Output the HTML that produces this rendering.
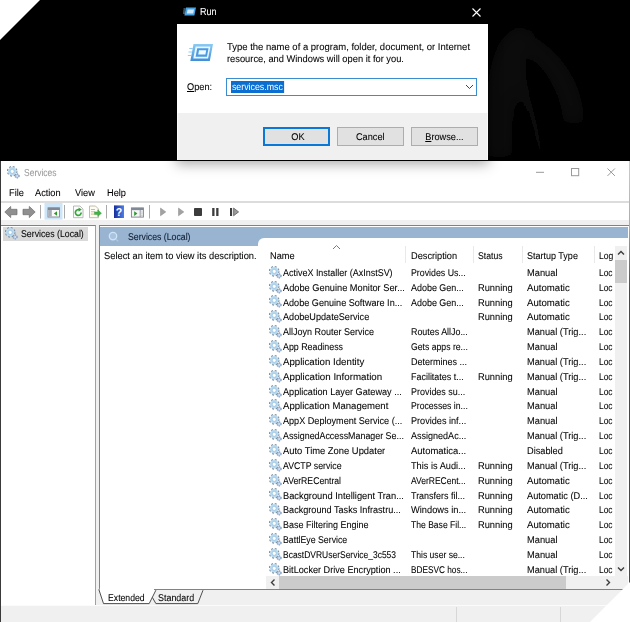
<!DOCTYPE html>
<html><head><meta charset="utf-8"><title>Services</title>
<style>
html,body{margin:0;padding:0}
body{width:630px;height:622px;position:relative;overflow:hidden;background:#fff;font-family:"Liberation Sans",sans-serif;}
.t{position:absolute;height:12px;line-height:12px;white-space:nowrap;transform:scaleX(.94);transform-origin:0 50%;text-rendering:geometricPrecision;-webkit-text-stroke:.07px currentColor}
.gear{position:absolute}
#top{position:absolute;left:0;top:0;width:630px;height:161px;background:#000}
#smoke{position:absolute;left:488px;top:0}
#run{position:absolute;left:177px;top:0;width:311px;height:160px;background:#000;box-shadow:0 1px 0 rgba(0,0,0,.45),0 3px 12px 1px rgba(0,0,0,.34)}
#runbody{position:absolute;left:0;top:24px;width:311px;height:88.5px;background:#fff}
#runfoot{position:absolute;left:0;top:112.5px;width:311px;height:47.500px;background:#f0f0f0;border-left:1px solid #fafafa;border-right:1px solid #fafafa;box-sizing:border-box}
#inp{position:absolute;left:226px;top:78px;width:251px;height:18px;box-sizing:border-box;border:1px solid #3a8ed0;background:#fff}
#sel{position:absolute;left:3.5px;top:1.5px;height:12.500px;line-height:14px;font-size:9.8px;transform:scaleX(.90);transform-origin:0 50%;text-rendering:geometricPrecision;background:#0a6fd0;color:#fff;padding:0 1px}
.btn{position:absolute;top:127px;width:67px;height:19px;box-sizing:border-box;border:1px solid #adadad;background:#e1e1e1;font-size:9.8px;line-height:19.5px;text-align:center;color:#000;text-rendering:geometricPrecision;-webkit-text-stroke:.07px #000}
.btn span{display:inline-block;transform:scaleX(.94)}
#ok{border:2px solid #0a78d7;line-height:17.5px;text-indent:2px}
#svc{position:absolute;left:0;top:161px;width:630px;height:461px;background:#fff}
#shadow{position:absolute;left:168px;top:160px;width:330px;height:11px;background:linear-gradient(rgba(0,0,0,.22),rgba(0,0,0,.06) 50%,rgba(0,0,0,0))}
</style></head><body>
<div id="top"></div>
<svg id="smoke" width="142" height="161" viewBox="488 0 142 161"><defs><filter id="bl" x="-50%" y="-50%" width="200%" height="200%"><feGaussianBlur stdDeviation="9"/></filter></defs><g filter="url(#bl)" fill="none" stroke="#161616" stroke-linecap="round"><path d="M499 150C497 95 503 48 520 38" stroke-width="15"/><path d="M520 38C545 52 568 75 574 118" stroke-width="11"/><path d="M515 60C525 90 535 120 540 150" stroke-width="12" stroke="#0f0f0f"/></g></svg>
<div id="svc"></div>
<div id="run"><div id="runbody"></div><div id="runfoot"></div></div>
<svg style="position:absolute;left:183px;top:6px" width="14" height="12" viewBox="0 0 14 12"><path d="M3 1.5h10l-1.6 8H1.4z" fill="#4aa3e0"/><path d="M4.6 3.4h6.4l-.8 4.2H3.8z" fill="#cfeaff"/><path d="M0.5 3h2M0.2 5h2M0 7h2" stroke="#8fd0ff" stroke-width=".8"/></svg>
<div class="t" style="left:199.8px;top:7.10px;font-size:10.2px;color:#fff;transform:scaleX(0.888);">Run</div>
<svg style="position:absolute;left:471.5px;top:7.5px" width="9" height="9" viewBox="0 0 9 9"><path d="M.5 .5l8 8M8.500 .5l-8 8" stroke="#fff" stroke-width="1.100"/></svg>
<svg style="position:absolute;left:186.5px;top:43px" width="27" height="20" viewBox="0 0 27 20"><defs><linearGradient id="rg" x1="0" y1="0" x2="0" y2="1"><stop offset="0" stop-color="#8ccbf3"/><stop offset="1" stop-color="#3f8fd6"/></linearGradient></defs><path d="M6.500 1h19.500l-3.200 17H3.300z" fill="url(#rg)"/><path d="M8.600 3.400h14.800l-2.300 12.200H6.300z" fill="#e9f6ff"/><path d="M10.200 5.200h11.300l-1.600 8.600H8.600z" fill="#4a9be0"/><path d="M12 7.300h7.200l-.8 4.200h-7.200z" fill="#f2faff"/><path d="M2.200 5.500h3.600M1.500 9h3.600M.8 12.500h3.600" stroke="#8fcdf5" stroke-width="1.200"/></svg>
<div class="t" style="left:226.7px;top:42.20px;font-size:9.8px;color:#000;transform:scaleX(0.968);">Type the name of a program, folder, document, or Internet</div>
<div class="t" style="left:226.7px;top:53.70px;font-size:9.8px;color:#000;transform:scaleX(0.95);">resource, and Windows will open it for you.</div>
<div class="t" style="left:187px;top:82.10px;font-size:9.8px;color:#000;"><u>O</u>pen:</div>
<div id="inp"><span id="sel">services.msc</span></div>
<svg style="position:absolute;left:465px;top:84px" width="9" height="6" viewBox="0 0 9 6"><path d="M1 1l3.5 3.5L8 1" fill="none" stroke="#444" stroke-width="1"/></svg>
<div class="btn" id="ok" style="left:263px"><span>OK</span></div>
<div class="btn" style="left:337px"><span>Cancel</span></div>
<div class="btn" style="left:411px"><span><u>B</u>rowse...</span></div>
<svg class="gear" style="left:7px;top:165.5px" width="14" height="13" viewBox="0 0 14 13"><circle cx="5.200" cy="5.300" r="4.600" fill="none" stroke="#7e93a6" stroke-width="1.500" stroke-dasharray="1.900 1.713"/><circle cx="5.200" cy="5.300" r="2.950" fill="#fff" stroke="#bddaee" stroke-width="2.700"/><circle cx="5.200" cy="5.300" r="2.300" fill="none" stroke="#a6cfea" stroke-width="1"/><circle cx="10.100" cy="9.900" r="2.050" fill="#adc3df" stroke="#7f98be" stroke-width="1.100" stroke-dasharray="1.100 1.046"/><circle cx="10.100" cy="9.900" r=".75" fill="#eef6ff"/></svg>
<div class="t" style="left:24px;top:167.70px;font-size:10px;color:#999;transform:scaleX(0.85);">Services</div>
<svg style="position:absolute;left:530px;top:164px" width="90" height="16" viewBox="0 0 90 16"><g stroke="#999" stroke-width="1" fill="none"><path d="M6 8.300h8"/><rect x="41.500" y="4.500" width="7.200" height="7.200"/><path d="M77.500 4.500l7.400 7.400M84.900 4.500l-7.400 7.400"/></g></svg>
<div class="t" style="left:9px;top:187.80px;font-size:9.8px;color:#000;">File</div>
<div class="t" style="left:35px;top:187.80px;font-size:9.8px;color:#000;">Action</div>
<div class="t" style="left:75px;top:187.80px;font-size:9.8px;color:#000;">View</div>
<div class="t" style="left:107px;top:187.80px;font-size:9.8px;color:#000;">Help</div>
<div style="position:absolute;left:0px;top:201px;width:630px;height:1.5px;background:#dcdcdc"></div>
<svg style="position:absolute;left:0;top:203px" width="250" height="19" viewBox="0 0 250 19">
<rect x="44.500" y="0" width="18" height="16.600" fill="#cde5f8"/>
<g fill="#909090" stroke="#6e6e6e" stroke-width=".7" stroke-linejoin="round"><path d="M4.800 9l5.900-5.600v2.900h6.300v5.400h-6.300v2.900z"/><path d="M35.200 9l-5.900-5.600v2.900h-6.300v5.400h6.300v2.900z"/></g>
<g stroke="#a9a9a9" stroke-width="1"><path d="M40.500 2v13.500M64.500 2v13.500M106.500 2v13.500M149.500 2v13.500"/></g>
<g><rect x="48" y="4.800" width="11.500" height="9.200" fill="#fafafa" stroke="#80868e" stroke-width=".9"/><rect x="48" y="4.800" width="11.500" height="2.200" fill="#7f8894"/><rect x="48.400" y="7" width="3.400" height="6.600" fill="#a9afb8"/><path d="M57 8.200l-3.200 2.300 3.200 2.300z" fill="#2a9a2f"/></g>
<g><path d="M73.500 3h6.500l3 3v8.700h-9.500z" fill="#fcfcfc" stroke="#a8a8a8" stroke-width=".8"/><path d="M81.200 9.600a2.900 2.900 0 1 1-1.300-2.500" fill="none" stroke="#35a53a" stroke-width="1.700"/><path d="M78.600 4.600l3.200 2-3.200 2.200z" fill="#35a53a"/></g>
<g><path d="M89.500 3h6l3 3v8.700h-9z" fill="#fdfcf4" stroke="#b3ad94" stroke-width=".8"/><path d="M91 6.500h4M91 8.800h4M91 11.100h3.500" stroke="#c9b679" stroke-width=".9"/><path d="M94.500 8.900h3.200v-2.100l3.800 3.400-3.800 3.400v-2.100h-3.200z" fill="#3fb344" stroke="#2e9434" stroke-width=".4"/></g>
<g><rect x="114" y="2.400" width="10" height="12.600" fill="url(#hg)"/><text x="119" y="12.600" font-family="Liberation Sans, sans-serif" font-size="10.500" font-weight="bold" fill="#fff" text-anchor="middle">?</text></g>
<defs><linearGradient id="hg" x1="0" x2="1" y1="0" y2="0"><stop offset="0" stop-color="#1a2c9c"/><stop offset="1" stop-color="#4b80e6"/></linearGradient></defs>
<g><rect x="131.400" y="4.900" width="12" height="9.200" fill="#f4f4f4" stroke="#7c7f86" stroke-width=".9"/><rect x="131.400" y="4.900" width="12" height="2.200" fill="#7f8894"/><path d="M140.200 7v7" stroke="#8e9299" stroke-width=".9"/><path d="M141.900 8.500v4.500" stroke="#9aa0a8" stroke-width=".8" stroke-dasharray="1 .8"/><path d="M134.200 8.300l3.200 2.300-3.200 2.300z" fill="#2a9a2f"/></g>
<g fill="#a2a2a2" stroke="#8a8a8a" stroke-width=".5"><path d="M160.500 5l5.300 3.900-5.300 3.900z"/><path d="M178.500 5l5.300 3.900-5.300 3.900z"/></g>
<g fill="#3c3c3c"><rect x="194" y="5" width="8" height="8" rx=".8"/><rect x="212.200" y="5" width="2.300" height="8"/><rect x="216.200" y="5" width="2.300" height="8"/><rect x="230" y="5" width="2.100" height="8"/></g><path d="M233.600 5l5 3.900-5 3.900z" fill="#9a9a9a" stroke="#555" stroke-width=".7"/>
</svg>
<div style="position:absolute;left:0px;top:219.5px;width:630px;height:6.5px;background:#f0f0f0"></div>
<div style="position:absolute;left:0px;top:225px;width:96px;height:380px;background:#fff;border:1px solid #828282;border-left-color:#555;border-right-color:#a0a0a0;border-bottom:0;box-sizing:border-box"></div>
<div style="position:absolute;left:3px;top:227px;width:85px;height:14px;background:#d9d9d9"></div>
<svg class="gear" style="left:5px;top:227px" width="14" height="13" viewBox="0 0 14 13"><circle cx="5.200" cy="5.300" r="4.600" fill="none" stroke="#7e93a6" stroke-width="1.500" stroke-dasharray="1.900 1.713"/><circle cx="5.200" cy="5.300" r="2.950" fill="#fff" stroke="#bddaee" stroke-width="2.700"/><circle cx="5.200" cy="5.300" r="2.300" fill="none" stroke="#a6cfea" stroke-width="1"/><circle cx="10.100" cy="9.900" r="2.050" fill="#adc3df" stroke="#7f98be" stroke-width="1.100" stroke-dasharray="1.100 1.046"/><circle cx="10.100" cy="9.900" r=".75" fill="#eef6ff"/></svg>
<div class="t" style="left:21.3px;top:229.00px;font-size:9.8px;color:#000;transform:scaleX(0.894);">Services (Local)</div>
<div style="position:absolute;left:96px;top:225px;width:3.5px;height:381px;background:#f0f0f0"></div>
<div style="position:absolute;left:99px;top:225px;width:531px;height:365px;background:#fff;border:1px solid #828282;box-sizing:border-box"></div>
<div style="position:absolute;left:100px;top:226.5px;width:528px;height:19px;background:#99b4d1"></div>
<svg style="position:absolute;left:107px;top:230px" width="13" height="13" viewBox="0 0 13 13"><circle cx="6" cy="6.100" r="3.700" fill="#a9c3df" stroke="#cfe4f6" stroke-width="1.300"/><path d="M9.200 9.300l2 2" stroke="#b4cbe4" stroke-width="1.200"/></svg>
<div class="t" style="left:128px;top:231.80px;font-size:9.8px;color:#0b1a2e;transform:scaleX(0.89);">Services (Local)</div>
<div class="t" style="left:104.3px;top:251.20px;font-size:9.8px;color:#000;transform:scaleX(0.95);">Select an item to view its description.</div>
<div style="position:absolute;left:258px;top:238px;width:370px;height:351px;background:#fff;border-radius:6px 0 0 0"></div>
<div class="t" style="left:270.3px;top:251.20px;font-size:9.8px;color:#000;">Name</div>
<div class="t" style="left:411.2px;top:251.20px;font-size:9.8px;color:#000;">Description</div>
<div class="t" style="left:477.8px;top:251.20px;font-size:9.8px;color:#000;transform:scaleX(0.885);">Status</div>
<div class="t" style="left:527.3px;top:251.20px;font-size:9.8px;color:#000;transform:scaleX(0.919);">Startup Type</div>
<div class="t" style="left:598.8px;top:251.20px;font-size:9.8px;color:#000;transform:scaleX(0.874);">Log</div>
<svg style="position:absolute;left:332px;top:244px" width="9" height="6" viewBox="0 0 9 6"><path d="M1 5l3.500-3.500L8 5" fill="none" stroke="#7a7a7a" stroke-width="1"/></svg>
<div style="position:absolute;left:404.5px;top:246px;width:1px;height:17px;background:#e9e9e9"></div>
<div style="position:absolute;left:472.5px;top:246px;width:1px;height:17px;background:#e9e9e9"></div>
<div style="position:absolute;left:521.5px;top:246px;width:1px;height:17px;background:#e9e9e9"></div>
<div style="position:absolute;left:593.5px;top:246px;width:1px;height:17px;background:#e9e9e9"></div>
<svg class="gear" style="left:268.8px;top:265.7px" width="14" height="13" viewBox="0 0 14 13"><circle cx="5.200" cy="5.300" r="4.600" fill="none" stroke="#7e93a6" stroke-width="1.500" stroke-dasharray="1.900 1.713"/><circle cx="5.200" cy="5.300" r="2.950" fill="#fff" stroke="#bddaee" stroke-width="2.700"/><circle cx="5.200" cy="5.300" r="2.300" fill="none" stroke="#a6cfea" stroke-width="1"/><circle cx="10.100" cy="9.900" r="2.050" fill="#adc3df" stroke="#7f98be" stroke-width="1.100" stroke-dasharray="1.100 1.046"/><circle cx="10.100" cy="9.900" r=".75" fill="#eef6ff"/></svg>
<div class="t" style="left:282.9px;top:267.80px;font-size:9.8px;color:#000;transform:scaleX(0.915);">ActiveX Installer (AxInstSV)</div>
<div class="t" style="left:411.2px;top:267.80px;font-size:9.8px;color:#000;transform:scaleX(0.897);">Provides Us...</div>
<div class="t" style="left:527.3px;top:267.80px;font-size:9.8px;color:#000;transform:scaleX(0.949);">Manual</div>
<div class="t" style="left:598.8px;top:267.80px;font-size:9.8px;color:#000;transform:scaleX(0.855);">Loc</div>
<svg class="gear" style="left:268.8px;top:280.6px" width="14" height="13" viewBox="0 0 14 13"><circle cx="5.200" cy="5.300" r="4.600" fill="none" stroke="#7e93a6" stroke-width="1.500" stroke-dasharray="1.900 1.713"/><circle cx="5.200" cy="5.300" r="2.950" fill="#fff" stroke="#bddaee" stroke-width="2.700"/><circle cx="5.200" cy="5.300" r="2.300" fill="none" stroke="#a6cfea" stroke-width="1"/><circle cx="10.100" cy="9.900" r="2.050" fill="#adc3df" stroke="#7f98be" stroke-width="1.100" stroke-dasharray="1.100 1.046"/><circle cx="10.100" cy="9.900" r=".75" fill="#eef6ff"/></svg>
<div class="t" style="left:282.9px;top:282.65px;font-size:9.8px;color:#000;transform:scaleX(0.944);">Adobe Genuine Monitor Ser...</div>
<div class="t" style="left:411.2px;top:282.65px;font-size:9.8px;color:#000;transform:scaleX(0.913);">Adobe Gen...</div>
<div class="t" style="left:477.8px;top:282.65px;font-size:9.8px;color:#000;transform:scaleX(0.948);">Running</div>
<div class="t" style="left:527.3px;top:282.65px;font-size:9.8px;color:#000;transform:scaleX(0.982);">Automatic</div>
<div class="t" style="left:598.8px;top:282.65px;font-size:9.8px;color:#000;transform:scaleX(0.855);">Loc</div>
<svg class="gear" style="left:268.8px;top:295.4px" width="14" height="13" viewBox="0 0 14 13"><circle cx="5.200" cy="5.300" r="4.600" fill="none" stroke="#7e93a6" stroke-width="1.500" stroke-dasharray="1.900 1.713"/><circle cx="5.200" cy="5.300" r="2.950" fill="#fff" stroke="#bddaee" stroke-width="2.700"/><circle cx="5.200" cy="5.300" r="2.300" fill="none" stroke="#a6cfea" stroke-width="1"/><circle cx="10.100" cy="9.900" r="2.050" fill="#adc3df" stroke="#7f98be" stroke-width="1.100" stroke-dasharray="1.100 1.046"/><circle cx="10.100" cy="9.900" r=".75" fill="#eef6ff"/></svg>
<div class="t" style="left:282.9px;top:297.50px;font-size:9.8px;color:#000;transform:scaleX(0.928);">Adobe Genuine Software In...</div>
<div class="t" style="left:411.2px;top:297.50px;font-size:9.8px;color:#000;transform:scaleX(0.913);">Adobe Gen...</div>
<div class="t" style="left:477.8px;top:297.50px;font-size:9.8px;color:#000;transform:scaleX(0.948);">Running</div>
<div class="t" style="left:527.3px;top:297.50px;font-size:9.8px;color:#000;transform:scaleX(0.982);">Automatic</div>
<div class="t" style="left:598.8px;top:297.50px;font-size:9.8px;color:#000;transform:scaleX(0.855);">Loc</div>
<svg class="gear" style="left:268.8px;top:310.2px" width="14" height="13" viewBox="0 0 14 13"><circle cx="5.200" cy="5.300" r="4.600" fill="none" stroke="#7e93a6" stroke-width="1.500" stroke-dasharray="1.900 1.713"/><circle cx="5.200" cy="5.300" r="2.950" fill="#fff" stroke="#bddaee" stroke-width="2.700"/><circle cx="5.200" cy="5.300" r="2.300" fill="none" stroke="#a6cfea" stroke-width="1"/><circle cx="10.100" cy="9.900" r="2.050" fill="#adc3df" stroke="#7f98be" stroke-width="1.100" stroke-dasharray="1.100 1.046"/><circle cx="10.100" cy="9.900" r=".75" fill="#eef6ff"/></svg>
<div class="t" style="left:282.9px;top:312.35px;font-size:9.8px;color:#000;transform:scaleX(0.931);">AdobeUpdateService</div>
<div class="t" style="left:477.8px;top:312.35px;font-size:9.8px;color:#000;transform:scaleX(0.948);">Running</div>
<div class="t" style="left:527.3px;top:312.35px;font-size:9.8px;color:#000;transform:scaleX(0.982);">Automatic</div>
<div class="t" style="left:598.8px;top:312.35px;font-size:9.8px;color:#000;transform:scaleX(0.855);">Loc</div>
<svg class="gear" style="left:268.8px;top:325.1px" width="14" height="13" viewBox="0 0 14 13"><circle cx="5.200" cy="5.300" r="4.600" fill="none" stroke="#7e93a6" stroke-width="1.500" stroke-dasharray="1.900 1.713"/><circle cx="5.200" cy="5.300" r="2.950" fill="#fff" stroke="#bddaee" stroke-width="2.700"/><circle cx="5.200" cy="5.300" r="2.300" fill="none" stroke="#a6cfea" stroke-width="1"/><circle cx="10.100" cy="9.900" r="2.050" fill="#adc3df" stroke="#7f98be" stroke-width="1.100" stroke-dasharray="1.100 1.046"/><circle cx="10.100" cy="9.900" r=".75" fill="#eef6ff"/></svg>
<div class="t" style="left:282.9px;top:327.20px;font-size:9.8px;color:#000;transform:scaleX(0.918);">AllJoyn Router Service</div>
<div class="t" style="left:411.2px;top:327.20px;font-size:9.8px;color:#000;transform:scaleX(0.907);">Routes AllJo...</div>
<div class="t" style="left:527.3px;top:327.20px;font-size:9.8px;color:#000;transform:scaleX(0.943);">Manual (Trig...</div>
<div class="t" style="left:598.8px;top:327.20px;font-size:9.8px;color:#000;transform:scaleX(0.855);">Loc</div>
<svg class="gear" style="left:268.8px;top:339.9px" width="14" height="13" viewBox="0 0 14 13"><circle cx="5.200" cy="5.300" r="4.600" fill="none" stroke="#7e93a6" stroke-width="1.500" stroke-dasharray="1.900 1.713"/><circle cx="5.200" cy="5.300" r="2.950" fill="#fff" stroke="#bddaee" stroke-width="2.700"/><circle cx="5.200" cy="5.300" r="2.300" fill="none" stroke="#a6cfea" stroke-width="1"/><circle cx="10.100" cy="9.900" r="2.050" fill="#adc3df" stroke="#7f98be" stroke-width="1.100" stroke-dasharray="1.100 1.046"/><circle cx="10.100" cy="9.900" r=".75" fill="#eef6ff"/></svg>
<div class="t" style="left:282.9px;top:342.05px;font-size:9.8px;color:#000;transform:scaleX(0.903);">App Readiness</div>
<div class="t" style="left:411.2px;top:342.05px;font-size:9.8px;color:#000;transform:scaleX(0.884);">Gets apps re...</div>
<div class="t" style="left:527.3px;top:342.05px;font-size:9.8px;color:#000;transform:scaleX(0.949);">Manual</div>
<div class="t" style="left:598.8px;top:342.05px;font-size:9.8px;color:#000;transform:scaleX(0.855);">Loc</div>
<svg class="gear" style="left:268.8px;top:354.8px" width="14" height="13" viewBox="0 0 14 13"><circle cx="5.200" cy="5.300" r="4.600" fill="none" stroke="#7e93a6" stroke-width="1.500" stroke-dasharray="1.900 1.713"/><circle cx="5.200" cy="5.300" r="2.950" fill="#fff" stroke="#bddaee" stroke-width="2.700"/><circle cx="5.200" cy="5.300" r="2.300" fill="none" stroke="#a6cfea" stroke-width="1"/><circle cx="10.100" cy="9.900" r="2.050" fill="#adc3df" stroke="#7f98be" stroke-width="1.100" stroke-dasharray="1.100 1.046"/><circle cx="10.100" cy="9.900" r=".75" fill="#eef6ff"/></svg>
<div class="t" style="left:282.9px;top:356.90px;font-size:9.8px;color:#000;transform:scaleX(0.988);">Application Identity</div>
<div class="t" style="left:411.2px;top:356.90px;font-size:9.8px;color:#000;transform:scaleX(0.918);">Determines ...</div>
<div class="t" style="left:527.3px;top:356.90px;font-size:9.8px;color:#000;transform:scaleX(0.943);">Manual (Trig...</div>
<div class="t" style="left:598.8px;top:356.90px;font-size:9.8px;color:#000;transform:scaleX(0.855);">Loc</div>
<svg class="gear" style="left:268.8px;top:369.6px" width="14" height="13" viewBox="0 0 14 13"><circle cx="5.200" cy="5.300" r="4.600" fill="none" stroke="#7e93a6" stroke-width="1.500" stroke-dasharray="1.900 1.713"/><circle cx="5.200" cy="5.300" r="2.950" fill="#fff" stroke="#bddaee" stroke-width="2.700"/><circle cx="5.200" cy="5.300" r="2.300" fill="none" stroke="#a6cfea" stroke-width="1"/><circle cx="10.100" cy="9.900" r="2.050" fill="#adc3df" stroke="#7f98be" stroke-width="1.100" stroke-dasharray="1.100 1.046"/><circle cx="10.100" cy="9.900" r=".75" fill="#eef6ff"/></svg>
<div class="t" style="left:282.9px;top:371.75px;font-size:9.8px;color:#000;transform:scaleX(0.995);">Application Information</div>
<div class="t" style="left:411.2px;top:371.75px;font-size:9.8px;color:#000;transform:scaleX(0.913);">Facilitates t...</div>
<div class="t" style="left:477.8px;top:371.75px;font-size:9.8px;color:#000;transform:scaleX(0.948);">Running</div>
<div class="t" style="left:527.3px;top:371.75px;font-size:9.8px;color:#000;transform:scaleX(0.943);">Manual (Trig...</div>
<div class="t" style="left:598.8px;top:371.75px;font-size:9.8px;color:#000;transform:scaleX(0.855);">Loc</div>
<svg class="gear" style="left:268.8px;top:384.5px" width="14" height="13" viewBox="0 0 14 13"><circle cx="5.200" cy="5.300" r="4.600" fill="none" stroke="#7e93a6" stroke-width="1.500" stroke-dasharray="1.900 1.713"/><circle cx="5.200" cy="5.300" r="2.950" fill="#fff" stroke="#bddaee" stroke-width="2.700"/><circle cx="5.200" cy="5.300" r="2.300" fill="none" stroke="#a6cfea" stroke-width="1"/><circle cx="10.100" cy="9.900" r="2.050" fill="#adc3df" stroke="#7f98be" stroke-width="1.100" stroke-dasharray="1.100 1.046"/><circle cx="10.100" cy="9.900" r=".75" fill="#eef6ff"/></svg>
<div class="t" style="left:282.9px;top:386.60px;font-size:9.8px;color:#000;transform:scaleX(0.932);">Application Layer Gateway ...</div>
<div class="t" style="left:411.2px;top:386.60px;font-size:9.8px;color:#000;transform:scaleX(0.913);">Provides su...</div>
<div class="t" style="left:527.3px;top:386.60px;font-size:9.8px;color:#000;transform:scaleX(0.949);">Manual</div>
<div class="t" style="left:598.8px;top:386.60px;font-size:9.8px;color:#000;transform:scaleX(0.855);">Loc</div>
<svg class="gear" style="left:268.8px;top:399.3px" width="14" height="13" viewBox="0 0 14 13"><circle cx="5.200" cy="5.300" r="4.600" fill="none" stroke="#7e93a6" stroke-width="1.500" stroke-dasharray="1.900 1.713"/><circle cx="5.200" cy="5.300" r="2.950" fill="#fff" stroke="#bddaee" stroke-width="2.700"/><circle cx="5.200" cy="5.300" r="2.300" fill="none" stroke="#a6cfea" stroke-width="1"/><circle cx="10.100" cy="9.900" r="2.050" fill="#adc3df" stroke="#7f98be" stroke-width="1.100" stroke-dasharray="1.100 1.046"/><circle cx="10.100" cy="9.900" r=".75" fill="#eef6ff"/></svg>
<div class="t" style="left:282.9px;top:401.45px;font-size:9.8px;color:#000;transform:scaleX(0.977);">Application Management</div>
<div class="t" style="left:411.2px;top:401.45px;font-size:9.8px;color:#000;transform:scaleX(0.884);">Processes in...</div>
<div class="t" style="left:527.3px;top:401.45px;font-size:9.8px;color:#000;transform:scaleX(0.949);">Manual</div>
<div class="t" style="left:598.8px;top:401.45px;font-size:9.8px;color:#000;transform:scaleX(0.855);">Loc</div>
<svg class="gear" style="left:268.8px;top:414.2px" width="14" height="13" viewBox="0 0 14 13"><circle cx="5.200" cy="5.300" r="4.600" fill="none" stroke="#7e93a6" stroke-width="1.500" stroke-dasharray="1.900 1.713"/><circle cx="5.200" cy="5.300" r="2.950" fill="#fff" stroke="#bddaee" stroke-width="2.700"/><circle cx="5.200" cy="5.300" r="2.300" fill="none" stroke="#a6cfea" stroke-width="1"/><circle cx="10.100" cy="9.900" r="2.050" fill="#adc3df" stroke="#7f98be" stroke-width="1.100" stroke-dasharray="1.100 1.046"/><circle cx="10.100" cy="9.900" r=".75" fill="#eef6ff"/></svg>
<div class="t" style="left:282.9px;top:416.30px;font-size:9.8px;color:#000;transform:scaleX(0.928);">AppX Deployment Service (...</div>
<div class="t" style="left:411.2px;top:416.30px;font-size:9.8px;color:#000;transform:scaleX(0.93);">Provides inf...</div>
<div class="t" style="left:527.3px;top:416.30px;font-size:9.8px;color:#000;transform:scaleX(0.949);">Manual</div>
<div class="t" style="left:598.8px;top:416.30px;font-size:9.8px;color:#000;transform:scaleX(0.855);">Loc</div>
<svg class="gear" style="left:268.8px;top:429.1px" width="14" height="13" viewBox="0 0 14 13"><circle cx="5.200" cy="5.300" r="4.600" fill="none" stroke="#7e93a6" stroke-width="1.500" stroke-dasharray="1.900 1.713"/><circle cx="5.200" cy="5.300" r="2.950" fill="#fff" stroke="#bddaee" stroke-width="2.700"/><circle cx="5.200" cy="5.300" r="2.300" fill="none" stroke="#a6cfea" stroke-width="1"/><circle cx="10.100" cy="9.900" r="2.050" fill="#adc3df" stroke="#7f98be" stroke-width="1.100" stroke-dasharray="1.100 1.046"/><circle cx="10.100" cy="9.900" r=".75" fill="#eef6ff"/></svg>
<div class="t" style="left:282.9px;top:431.15px;font-size:9.8px;color:#000;transform:scaleX(0.906);">AssignedAccessManager Se...</div>
<div class="t" style="left:411.2px;top:431.15px;font-size:9.8px;color:#000;transform:scaleX(0.921);">AssignedAc...</div>
<div class="t" style="left:527.3px;top:431.15px;font-size:9.8px;color:#000;transform:scaleX(0.943);">Manual (Trig...</div>
<div class="t" style="left:598.8px;top:431.15px;font-size:9.8px;color:#000;transform:scaleX(0.855);">Loc</div>
<svg class="gear" style="left:268.8px;top:443.9px" width="14" height="13" viewBox="0 0 14 13"><circle cx="5.200" cy="5.300" r="4.600" fill="none" stroke="#7e93a6" stroke-width="1.500" stroke-dasharray="1.900 1.713"/><circle cx="5.200" cy="5.300" r="2.950" fill="#fff" stroke="#bddaee" stroke-width="2.700"/><circle cx="5.200" cy="5.300" r="2.300" fill="none" stroke="#a6cfea" stroke-width="1"/><circle cx="10.100" cy="9.900" r="2.050" fill="#adc3df" stroke="#7f98be" stroke-width="1.100" stroke-dasharray="1.100 1.046"/><circle cx="10.100" cy="9.900" r=".75" fill="#eef6ff"/></svg>
<div class="t" style="left:282.9px;top:446.00px;font-size:9.8px;color:#000;transform:scaleX(0.958);">Auto Time Zone Updater</div>
<div class="t" style="left:411.2px;top:446.00px;font-size:9.8px;color:#000;transform:scaleX(0.965);">Automatica...</div>
<div class="t" style="left:527.3px;top:446.00px;font-size:9.8px;color:#000;">Disabled</div>
<div class="t" style="left:598.8px;top:446.00px;font-size:9.8px;color:#000;transform:scaleX(0.855);">Loc</div>
<svg class="gear" style="left:268.8px;top:458.7px" width="14" height="13" viewBox="0 0 14 13"><circle cx="5.200" cy="5.300" r="4.600" fill="none" stroke="#7e93a6" stroke-width="1.500" stroke-dasharray="1.900 1.713"/><circle cx="5.200" cy="5.300" r="2.950" fill="#fff" stroke="#bddaee" stroke-width="2.700"/><circle cx="5.200" cy="5.300" r="2.300" fill="none" stroke="#a6cfea" stroke-width="1"/><circle cx="10.100" cy="9.900" r="2.050" fill="#adc3df" stroke="#7f98be" stroke-width="1.100" stroke-dasharray="1.100 1.046"/><circle cx="10.100" cy="9.900" r=".75" fill="#eef6ff"/></svg>
<div class="t" style="left:282.9px;top:460.85px;font-size:9.8px;color:#000;transform:scaleX(0.894);">AVCTP service</div>
<div class="t" style="left:411.2px;top:460.85px;font-size:9.8px;color:#000;transform:scaleX(0.939);">This is Audi...</div>
<div class="t" style="left:477.8px;top:460.85px;font-size:9.8px;color:#000;transform:scaleX(0.948);">Running</div>
<div class="t" style="left:527.3px;top:460.85px;font-size:9.8px;color:#000;transform:scaleX(0.943);">Manual (Trig...</div>
<div class="t" style="left:598.8px;top:460.85px;font-size:9.8px;color:#000;transform:scaleX(0.855);">Loc</div>
<svg class="gear" style="left:268.8px;top:473.6px" width="14" height="13" viewBox="0 0 14 13"><circle cx="5.200" cy="5.300" r="4.600" fill="none" stroke="#7e93a6" stroke-width="1.500" stroke-dasharray="1.900 1.713"/><circle cx="5.200" cy="5.300" r="2.950" fill="#fff" stroke="#bddaee" stroke-width="2.700"/><circle cx="5.200" cy="5.300" r="2.300" fill="none" stroke="#a6cfea" stroke-width="1"/><circle cx="10.100" cy="9.900" r="2.050" fill="#adc3df" stroke="#7f98be" stroke-width="1.100" stroke-dasharray="1.100 1.046"/><circle cx="10.100" cy="9.900" r=".75" fill="#eef6ff"/></svg>
<div class="t" style="left:282.9px;top:475.70px;font-size:9.8px;color:#000;transform:scaleX(0.883);">AVerRECentral</div>
<div class="t" style="left:411.2px;top:475.70px;font-size:9.8px;color:#000;transform:scaleX(0.868);">AVerRECent...</div>
<div class="t" style="left:477.8px;top:475.70px;font-size:9.8px;color:#000;transform:scaleX(0.948);">Running</div>
<div class="t" style="left:527.3px;top:475.70px;font-size:9.8px;color:#000;transform:scaleX(0.982);">Automatic</div>
<div class="t" style="left:598.8px;top:475.70px;font-size:9.8px;color:#000;transform:scaleX(0.855);">Loc</div>
<svg class="gear" style="left:268.8px;top:488.4px" width="14" height="13" viewBox="0 0 14 13"><circle cx="5.200" cy="5.300" r="4.600" fill="none" stroke="#7e93a6" stroke-width="1.500" stroke-dasharray="1.900 1.713"/><circle cx="5.200" cy="5.300" r="2.950" fill="#fff" stroke="#bddaee" stroke-width="2.700"/><circle cx="5.200" cy="5.300" r="2.300" fill="none" stroke="#a6cfea" stroke-width="1"/><circle cx="10.100" cy="9.900" r="2.050" fill="#adc3df" stroke="#7f98be" stroke-width="1.100" stroke-dasharray="1.100 1.046"/><circle cx="10.100" cy="9.900" r=".75" fill="#eef6ff"/></svg>
<div class="t" style="left:282.9px;top:490.55px;font-size:9.8px;color:#000;transform:scaleX(0.949);">Background Intelligent Tran...</div>
<div class="t" style="left:411.2px;top:490.55px;font-size:9.8px;color:#000;transform:scaleX(0.914);">Transfers fil...</div>
<div class="t" style="left:477.8px;top:490.55px;font-size:9.8px;color:#000;transform:scaleX(0.948);">Running</div>
<div class="t" style="left:527.3px;top:490.55px;font-size:9.8px;color:#000;">Automatic (D...</div>
<div class="t" style="left:598.8px;top:490.55px;font-size:9.8px;color:#000;transform:scaleX(0.855);">Loc</div>
<svg class="gear" style="left:268.8px;top:503.3px" width="14" height="13" viewBox="0 0 14 13"><circle cx="5.200" cy="5.300" r="4.600" fill="none" stroke="#7e93a6" stroke-width="1.500" stroke-dasharray="1.900 1.713"/><circle cx="5.200" cy="5.300" r="2.950" fill="#fff" stroke="#bddaee" stroke-width="2.700"/><circle cx="5.200" cy="5.300" r="2.300" fill="none" stroke="#a6cfea" stroke-width="1"/><circle cx="10.100" cy="9.900" r="2.050" fill="#adc3df" stroke="#7f98be" stroke-width="1.100" stroke-dasharray="1.100 1.046"/><circle cx="10.100" cy="9.900" r=".75" fill="#eef6ff"/></svg>
<div class="t" style="left:282.9px;top:505.40px;font-size:9.8px;color:#000;transform:scaleX(0.93);">Background Tasks Infrastru...</div>
<div class="t" style="left:411.2px;top:505.40px;font-size:9.8px;color:#000;transform:scaleX(0.947);">Windows in...</div>
<div class="t" style="left:477.8px;top:505.40px;font-size:9.8px;color:#000;transform:scaleX(0.948);">Running</div>
<div class="t" style="left:527.3px;top:505.40px;font-size:9.8px;color:#000;transform:scaleX(0.982);">Automatic</div>
<div class="t" style="left:598.8px;top:505.40px;font-size:9.8px;color:#000;transform:scaleX(0.855);">Loc</div>
<svg class="gear" style="left:268.8px;top:518.2px" width="14" height="13" viewBox="0 0 14 13"><circle cx="5.200" cy="5.300" r="4.600" fill="none" stroke="#7e93a6" stroke-width="1.500" stroke-dasharray="1.900 1.713"/><circle cx="5.200" cy="5.300" r="2.950" fill="#fff" stroke="#bddaee" stroke-width="2.700"/><circle cx="5.200" cy="5.300" r="2.300" fill="none" stroke="#a6cfea" stroke-width="1"/><circle cx="10.100" cy="9.900" r="2.050" fill="#adc3df" stroke="#7f98be" stroke-width="1.100" stroke-dasharray="1.100 1.046"/><circle cx="10.100" cy="9.900" r=".75" fill="#eef6ff"/></svg>
<div class="t" style="left:282.9px;top:520.25px;font-size:9.8px;color:#000;transform:scaleX(0.917);">Base Filtering Engine</div>
<div class="t" style="left:411.2px;top:520.25px;font-size:9.8px;color:#000;transform:scaleX(0.874);">The Base Fil...</div>
<div class="t" style="left:477.8px;top:520.25px;font-size:9.8px;color:#000;transform:scaleX(0.948);">Running</div>
<div class="t" style="left:527.3px;top:520.25px;font-size:9.8px;color:#000;transform:scaleX(0.982);">Automatic</div>
<div class="t" style="left:598.8px;top:520.25px;font-size:9.8px;color:#000;transform:scaleX(0.855);">Loc</div>
<svg class="gear" style="left:268.8px;top:533.0px" width="14" height="13" viewBox="0 0 14 13"><circle cx="5.200" cy="5.300" r="4.600" fill="none" stroke="#7e93a6" stroke-width="1.500" stroke-dasharray="1.900 1.713"/><circle cx="5.200" cy="5.300" r="2.950" fill="#fff" stroke="#bddaee" stroke-width="2.700"/><circle cx="5.200" cy="5.300" r="2.300" fill="none" stroke="#a6cfea" stroke-width="1"/><circle cx="10.100" cy="9.900" r="2.050" fill="#adc3df" stroke="#7f98be" stroke-width="1.100" stroke-dasharray="1.100 1.046"/><circle cx="10.100" cy="9.900" r=".75" fill="#eef6ff"/></svg>
<div class="t" style="left:282.9px;top:535.10px;font-size:9.8px;color:#000;transform:scaleX(0.893);">BattlEye Service</div>
<div class="t" style="left:527.3px;top:535.10px;font-size:9.8px;color:#000;transform:scaleX(0.949);">Manual</div>
<div class="t" style="left:598.8px;top:535.10px;font-size:9.8px;color:#000;transform:scaleX(0.855);">Loc</div>
<svg class="gear" style="left:268.8px;top:547.9px" width="14" height="13" viewBox="0 0 14 13"><circle cx="5.200" cy="5.300" r="4.600" fill="none" stroke="#7e93a6" stroke-width="1.500" stroke-dasharray="1.900 1.713"/><circle cx="5.200" cy="5.300" r="2.950" fill="#fff" stroke="#bddaee" stroke-width="2.700"/><circle cx="5.200" cy="5.300" r="2.300" fill="none" stroke="#a6cfea" stroke-width="1"/><circle cx="10.100" cy="9.900" r="2.050" fill="#adc3df" stroke="#7f98be" stroke-width="1.100" stroke-dasharray="1.100 1.046"/><circle cx="10.100" cy="9.900" r=".75" fill="#eef6ff"/></svg>
<div class="t" style="left:282.9px;top:549.95px;font-size:9.8px;color:#000;transform:scaleX(0.865);">BcastDVRUserService_3c553</div>
<div class="t" style="left:411.2px;top:549.95px;font-size:9.8px;color:#000;transform:scaleX(0.876);">This user se...</div>
<div class="t" style="left:527.3px;top:549.95px;font-size:9.8px;color:#000;transform:scaleX(0.949);">Manual</div>
<div class="t" style="left:598.8px;top:549.95px;font-size:9.8px;color:#000;transform:scaleX(0.855);">Loc</div>
<svg class="gear" style="left:268.8px;top:562.7px" width="14" height="13" viewBox="0 0 14 13"><circle cx="5.200" cy="5.300" r="4.600" fill="none" stroke="#7e93a6" stroke-width="1.500" stroke-dasharray="1.900 1.713"/><circle cx="5.200" cy="5.300" r="2.950" fill="#fff" stroke="#bddaee" stroke-width="2.700"/><circle cx="5.200" cy="5.300" r="2.300" fill="none" stroke="#a6cfea" stroke-width="1"/><circle cx="10.100" cy="9.900" r="2.050" fill="#adc3df" stroke="#7f98be" stroke-width="1.100" stroke-dasharray="1.100 1.046"/><circle cx="10.100" cy="9.900" r=".75" fill="#eef6ff"/></svg>
<div class="t" style="left:282.9px;top:564.80px;font-size:9.8px;color:#000;transform:scaleX(0.932);">BitLocker Drive Encryption ...</div>
<div class="t" style="left:411.2px;top:564.80px;font-size:9.8px;color:#000;transform:scaleX(0.843);">BDESVC hos...</div>
<div class="t" style="left:527.3px;top:564.80px;font-size:9.8px;color:#000;transform:scaleX(0.943);">Manual (Trig...</div>
<div class="t" style="left:598.8px;top:564.80px;font-size:9.8px;color:#000;transform:scaleX(0.855);">Loc</div>
<div style="position:absolute;left:615.3px;top:246px;width:11.5px;height:330.5px;background:#f0f0f0"></div>
<div style="position:absolute;left:615.3px;top:259.5px;width:11.5px;height:23px;background:#cbcbcb"></div>
<svg style="position:absolute;left:617.2px;top:250.3px" width="8" height="6" viewBox="0 0 8 6"><path d="M1 4.500l3-3 3 3" fill="none" stroke="#3c3c3c" stroke-width="1.400"/></svg>
<svg style="position:absolute;left:617.2px;top:566px" width="8" height="6" viewBox="0 0 8 6"><path d="M1 1.500l3 3 3-3" fill="none" stroke="#3c3c3c" stroke-width="1.400"/></svg>
<div style="position:absolute;left:266px;top:576.3px;width:362px;height:12.4px;background:#f0f0f0"></div>
<div style="position:absolute;left:279px;top:576.3px;width:287.3px;height:12.4px;background:#cbcbcb"></div>
<svg style="position:absolute;left:269.5px;top:577.5px" width="6" height="9" viewBox="0 0 6 9"><path d="M4.500 1.500l-3 3 3 3" fill="none" stroke="#3c3c3c" stroke-width="1.400"/></svg>
<svg style="position:absolute;left:605px;top:577.5px" width="6" height="9" viewBox="0 0 6 9"><path d="M1.500 1.500l3 3-3 3" fill="none" stroke="#3c3c3c" stroke-width="1.400"/></svg>
<div style="position:absolute;left:96px;top:590px;width:534px;height:16px;background:#f0f0f0"></div>
<svg style="position:absolute;left:96px;top:588px" width="120" height="18" viewBox="0 -1 120 18"><path d="M3.300 -.2L7.500 14.600H53.200L59.700 1.500H58V-.2z" fill="#fff"/><path d="M2.800 .4L7.500 14.600H53.200L59.900 1.200" fill="none" stroke="#4f4f4f" stroke-width="1"/><path d="M56.300 8.300L59.900 14.600H101.800L107 1.200" fill="none" stroke="#4f4f4f" stroke-width="1"/></svg>
<div class="t" style="left:108.3px;top:592.80px;font-size:9.8px;color:#000;transform:scaleX(0.886);">Extended</div>
<div class="t" style="left:157.8px;top:592.80px;font-size:9.8px;color:#000;transform:scaleX(0.91);">Standard</div>
<div style="position:absolute;left:0px;top:605px;width:630px;height:17px;background:#f0f0f0;border-top:1px solid #fbfbfb;box-sizing:border-box"></div>
<div style="position:absolute;left:456px;top:607px;width:1px;height:15px;background:#d7d7d7"></div>
<div style="position:absolute;left:560px;top:607px;width:1px;height:15px;background:#d7d7d7"></div>
<div style="position:absolute;left:0px;top:161px;width:1px;height:461px;background:#3a3a3a"></div>
<div style="position:absolute;left:628.7px;top:161px;width:1.3px;height:461px;background:linear-gradient(#ccc,#aaa 14%,#4a4a4a 28%)"></div>
<svg style="position:absolute;left:0;top:0" width="42" height="42" viewBox="0 0 42 42"><path d="M0 0h40L0 40z" fill="#fff"/></svg>
<svg style="position:absolute;left:588px;top:580px" width="42" height="42" viewBox="0 0 42 42"><path d="M42 42h-40L42 2z" fill="#fff"/></svg>
</body></html>
